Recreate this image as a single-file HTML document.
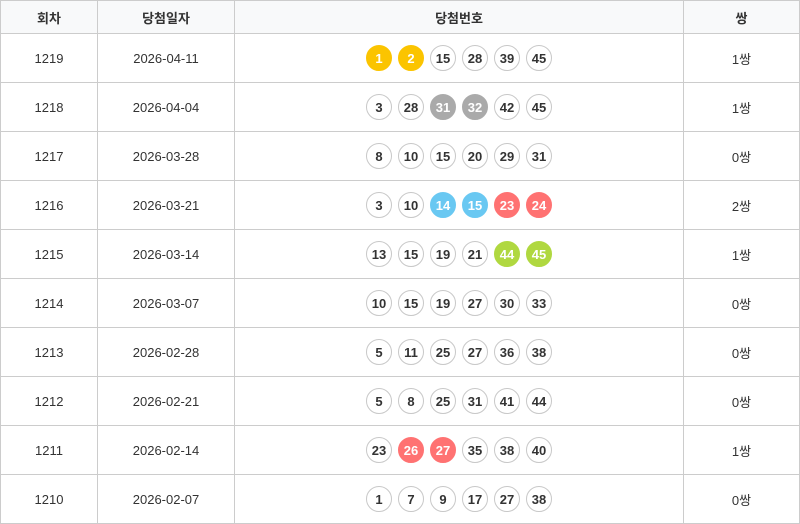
<!DOCTYPE html>
<html><head><meta charset="utf-8"><style>
*{margin:0;padding:0;box-sizing:border-box}
body{width:800px;height:524px;background:#fff;font-family:"Liberation Sans","Noto Sans CJK KR",sans-serif;color:#333;font-size:13px;overflow:hidden}
.r{display:flex;height:49px;border-bottom:1px solid #ccc;border-left:1px solid #ccc}
.h{height:34px;border-top:1px solid #ccc;background:#f8f9fa;font-weight:bold;font-size:13px}
.c{border-right:1px solid #ccc;display:flex;align-items:center;justify-content:center}
.c1{width:97px}.c2{width:137px}.c3{width:449px}.c4{width:116px}
.b{width:26px;height:26px;border-radius:50%;border:1px solid #c8c8c8;display:flex;align-items:center;justify-content:center;font-weight:bold;font-size:13px;margin:0 3px;color:#333}
.y{background:#fbc400;border-color:#fbc400;color:#fff}
.g{background:#aaa;border-color:#aaa;color:#fff}
.bl{background:#69c8f2;border-color:#69c8f2;color:#fff}
.rd{background:#ff7272;border-color:#ff7272;color:#fff}
.gr{background:#b0d840;border-color:#b0d840;color:#fff}
</style></head><body>
<div class="r h"><div class="c c1">회차</div><div class="c c2">당첨일자</div><div class="c c3">당첨번호</div><div class="c c4">쌍</div></div>
<div class="r"><div class="c c1">1219</div><div class="c c2">2026-04-11</div><div class="c c3"><span class="b y">1</span><span class="b y">2</span><span class="b">15</span><span class="b">28</span><span class="b">39</span><span class="b">45</span></div><div class="c c4">1쌍</div></div>
<div class="r"><div class="c c1">1218</div><div class="c c2">2026-04-04</div><div class="c c3"><span class="b">3</span><span class="b">28</span><span class="b g">31</span><span class="b g">32</span><span class="b">42</span><span class="b">45</span></div><div class="c c4">1쌍</div></div>
<div class="r"><div class="c c1">1217</div><div class="c c2">2026-03-28</div><div class="c c3"><span class="b">8</span><span class="b">10</span><span class="b">15</span><span class="b">20</span><span class="b">29</span><span class="b">31</span></div><div class="c c4">0쌍</div></div>
<div class="r"><div class="c c1">1216</div><div class="c c2">2026-03-21</div><div class="c c3"><span class="b">3</span><span class="b">10</span><span class="b bl">14</span><span class="b bl">15</span><span class="b rd">23</span><span class="b rd">24</span></div><div class="c c4">2쌍</div></div>
<div class="r"><div class="c c1">1215</div><div class="c c2">2026-03-14</div><div class="c c3"><span class="b">13</span><span class="b">15</span><span class="b">19</span><span class="b">21</span><span class="b gr">44</span><span class="b gr">45</span></div><div class="c c4">1쌍</div></div>
<div class="r"><div class="c c1">1214</div><div class="c c2">2026-03-07</div><div class="c c3"><span class="b">10</span><span class="b">15</span><span class="b">19</span><span class="b">27</span><span class="b">30</span><span class="b">33</span></div><div class="c c4">0쌍</div></div>
<div class="r"><div class="c c1">1213</div><div class="c c2">2026-02-28</div><div class="c c3"><span class="b">5</span><span class="b">11</span><span class="b">25</span><span class="b">27</span><span class="b">36</span><span class="b">38</span></div><div class="c c4">0쌍</div></div>
<div class="r"><div class="c c1">1212</div><div class="c c2">2026-02-21</div><div class="c c3"><span class="b">5</span><span class="b">8</span><span class="b">25</span><span class="b">31</span><span class="b">41</span><span class="b">44</span></div><div class="c c4">0쌍</div></div>
<div class="r"><div class="c c1">1211</div><div class="c c2">2026-02-14</div><div class="c c3"><span class="b">23</span><span class="b rd">26</span><span class="b rd">27</span><span class="b">35</span><span class="b">38</span><span class="b">40</span></div><div class="c c4">1쌍</div></div>
<div class="r"><div class="c c1">1210</div><div class="c c2">2026-02-07</div><div class="c c3"><span class="b">1</span><span class="b">7</span><span class="b">9</span><span class="b">17</span><span class="b">27</span><span class="b">38</span></div><div class="c c4">0쌍</div></div>
</body></html>
